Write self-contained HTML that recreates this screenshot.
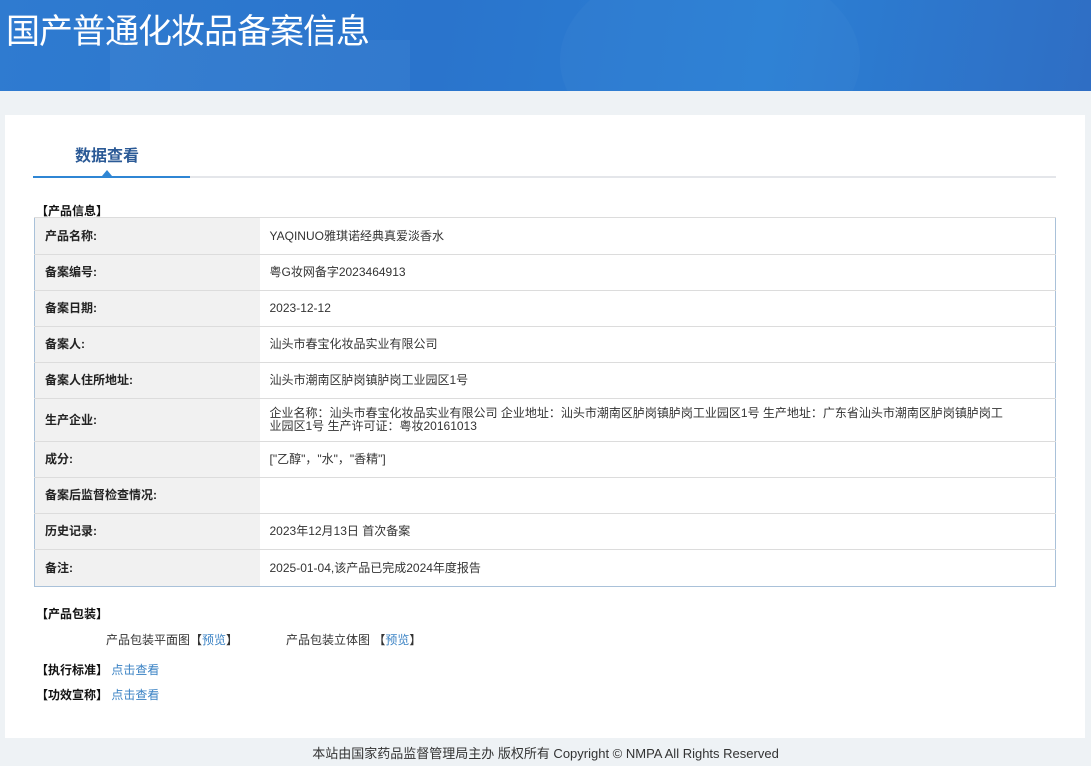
<!DOCTYPE html>
<html><head><meta charset="utf-8"><style>
*{margin:0;padding:0;box-sizing:border-box}
body{width:1091px;height:766px;background:#eef2f5;font-family:"Liberation Sans","Noto Sans CJK SC",sans-serif;font-size:12px;color:#333;position:relative;overflow:hidden}
.hd{position:absolute;left:0;top:0;width:1091px;height:91px;background:linear-gradient(100deg,#2f7bd0 0%,#2a74cc 40%,#2b7fd4 70%,#2f6ec4 100%);overflow:hidden}
.hd h1{position:absolute;left:6px;top:4px;font-size:34px;font-weight:normal;color:#fff;letter-spacing:-1px}
.c1{position:absolute;left:110px;top:40px;width:300px;height:120px;background:rgba(255,255,255,.04)}
.c2{position:absolute;left:560px;top:-40px;width:300px;height:200px;border-radius:50%;background:rgba(255,255,255,.025)}
.panel{position:absolute;left:5px;top:115px;width:1080px;height:623px;background:#fff}
.tab{position:absolute;left:75px;top:142px;font-size:16px;font-weight:bold;color:#2b5a96}
.ln{position:absolute;left:33px;top:176px;width:1023px;height:2px;background:#e4e6ea}
.lb{position:absolute;left:33px;top:176px;width:157px;height:2px;background:#2f86d4}
.tri{position:absolute;left:102px;top:170px;width:0;height:0;border-left:5px solid transparent;border-right:5px solid transparent;border-bottom:6px solid #2f86d4}
.sec{position:absolute;left:36px;font-weight:bold;color:#111;font-size:12px}
table{position:absolute;left:34px;top:217px;width:1022px;border-collapse:collapse;border:1px solid #a9c1d9}
td{border-top:1px solid #dcdcdc;height:36px;padding:0 10px;vertical-align:middle;line-height:13px}
td.l{width:225px;background:#f1f1f1;font-weight:bold;color:#222}
a{color:#3a82c4;text-decoration:none}
.ft{position:absolute;left:0;top:743px;width:1091px;text-align:center;font-size:13px;color:#333}
</style></head><body>
<div class="hd"><div class="c1"></div><div class="c2"></div><h1>国产普通化妆品备案信息</h1></div>
<div class="panel"></div>
<div class="tab">数据查看</div>
<div class="ln"></div><div class="lb"></div><div class="tri"></div>
<div class="sec" style="top:202px">【产品信息】</div>
<table>
<tr><td class="l" style="height:37px">产品名称:</td><td>YAQINUO雅琪诺经典真爱淡香水</td></tr>
<tr><td class="l">备案编号:</td><td>粤G妆网备字2023464913</td></tr>
<tr><td class="l">备案日期:</td><td>2023-12-12</td></tr>
<tr><td class="l">备案人:</td><td>汕头市春宝化妆品实业有限公司</td></tr>
<tr><td class="l">备案人住所地址:</td><td>汕头市潮南区胪岗镇胪岗工业园区1号</td></tr>
<tr><td class="l" style="height:43px">生产企业:</td><td style="padding-right:50px">企业名称：汕头市春宝化妆品实业有限公司 企业地址：汕头市潮南区胪岗镇胪岗工业园区1号 生产地址：广东省汕头市潮南区胪岗镇胪岗工业园区1号 生产许可证：粤妆20161013</td></tr>
<tr><td class="l">成分:</td><td>["乙醇"，"水"，"香精"]</td></tr>
<tr><td class="l">备案后监督检查情况:</td><td></td></tr>
<tr><td class="l">历史记录:</td><td>2023年12月13日 首次备案</td></tr>
<tr><td class="l" style="height:37px">备注:</td><td>2025-01-04,该产品已完成2024年度报告</td></tr>
</table>
<div class="sec" style="top:605px">【产品包装】</div>
<div style="position:absolute;left:106px;top:631px">产品包装平面图【<a>预览</a>】</div>
<div style="position:absolute;left:286px;top:631px">产品包装立体图 【<a>预览</a>】</div>
<div class="sec" style="top:661px">【执行标准】 <a style="font-weight:normal">点击查看</a></div>
<div class="sec" style="top:686px">【功效宣称】 <a style="font-weight:normal">点击查看</a></div>
<div class="ft">本站由国家药品监督管理局主办 版权所有 Copyright © NMPA All Rights Reserved</div>
</body></html>
